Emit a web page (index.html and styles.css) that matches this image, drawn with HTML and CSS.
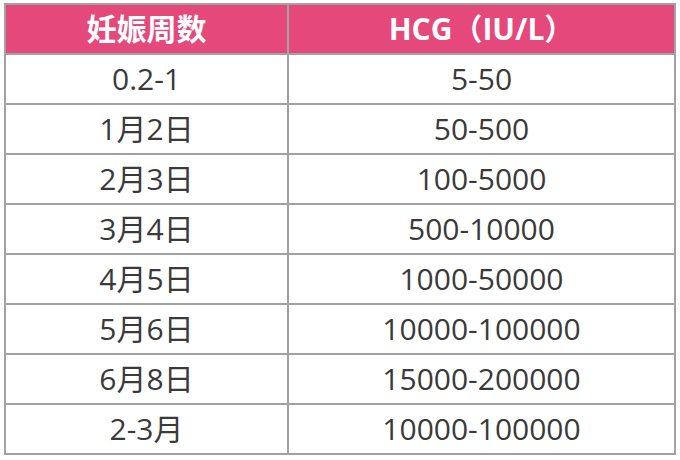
FILE: index.html
```html
<!DOCTYPE html>
<html lang="zh">
<head>
<meta charset="utf-8">
<link rel="stylesheet" href="styles.css">
</head>
<body>
<table class="hcg">
  <thead>
    <tr><th class="col-week">妊娠周数</th><th class="col-val">HCG（IU/L）</th></tr>
  </thead>
  <tbody>
    <tr><td>0.2-1</td><td>5-50</td></tr>
    <tr><td>1月2日</td><td>50-500</td></tr>
    <tr><td>2月3日</td><td>100-5000</td></tr>
    <tr><td>3月4日</td><td>500-10000</td></tr>
    <tr><td>4月5日</td><td>1000-50000</td></tr>
    <tr><td>5月6日</td><td>10000-100000</td></tr>
    <tr><td>6月8日</td><td>15000-200000</td></tr>
    <tr><td>2-3月</td><td>10000-100000</td></tr>
  </tbody>
</table>
</body>
</html>
```
FILE: styles.css
```css
html, body {
  margin: 0;
  padding: 0;
  background: #ffffff;
}
body {
  padding: 3px 4px;
  font-family: "Open Sans", "Noto Sans CJK SC", sans-serif;
}
.hcg {
  border-collapse: collapse;
  width: 672px;
  table-layout: fixed;
}
.hcg th, .hcg td {
  border: 2px solid #a2a2a2;
  height: 48px;
  padding: 0;
  text-align: center;
  vertical-align: middle;
  font-size: 30px;
  line-height: 1;
}
.hcg th {
  background: #e5487b;
  color: #ffffff;
  font-weight: 700;
}
.hcg td {
  color: #3a3a3a;
  font-weight: 400;
}
.col-week { width: 281px; }
```
